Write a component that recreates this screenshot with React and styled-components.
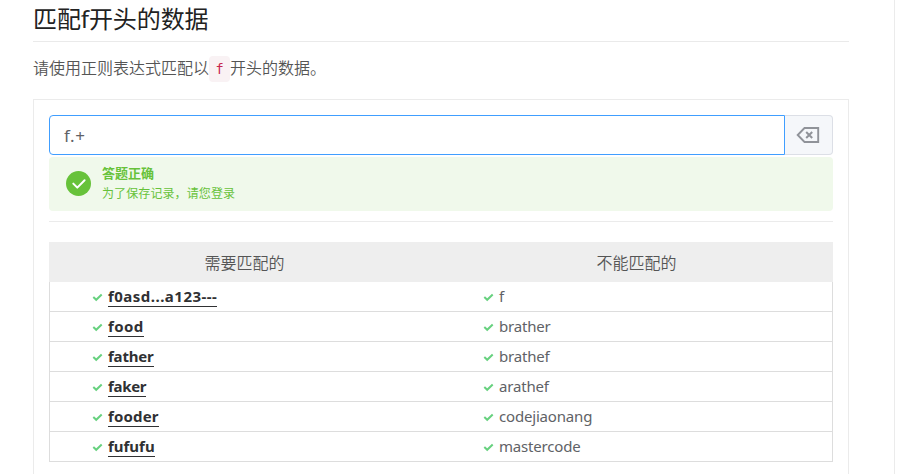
import React from "react";
import styled, { createGlobalStyle } from "styled-components";

const GlobalStyle = createGlobalStyle`
  *, *::before, *::after { box-sizing: border-box; }
  body {
    margin: 0;
    overflow: hidden;
    background: #fff;
    color: #555;
    font-family: "Noto Sans", "Noto Sans CJK SC", sans-serif;
    font-size: 16px;
  }
`;

const Page = styled.main`
  width: 895px;
  height: 474px;
  padding-left: 33px;
  padding-right: 45px;
  border-right: 1px solid #ebebeb;
  overflow: hidden;
  font-weight: 350;
`;

const Title = styled.h2`
  margin: 0;
  height: 42px;
  border-bottom: 1px solid #eaeaea;
  color: #222;
  font-size: 24px;
  font-weight: 400;
  line-height: 38px;
  letter-spacing: -0.1px;
  white-space: nowrap;
`;

const Intro = styled.p`
  display: flex;
  align-items: center;
  height: 26px;
  margin: 14px 0 17px;
  line-height: 24px;
  white-space: nowrap;
`;

const IntroText = styled.span`
  height: 26px;
`;

const Code = styled.code`
  width: 21px;
  height: 26px;
  border-radius: 4px;
  background: #f9f2f4;
  color: #c7254e;
  font: 400 13.6px/26px "DejaVu Sans Mono", monospace;
  text-align: center;
`;

const Card = styled.section`
  height: 400px;
  padding: 15px;
  border: 1px solid #ebebeb;
`;

const InputGroup = styled.div`
  display: flex;
  height: 40px;
`;

const Input = styled.input`
  flex: 1;
  min-width: 0;
  padding: 0 14px;
  border: 1px solid #409eff;
  border-radius: 4px 0 0 4px;
  outline: none;
  background: #fff;
  color: #606266;
  font: 400 17px "Noto Sans", sans-serif;
  letter-spacing: 0.6px;
`;

const ClearButton = styled.button`
  display: flex;
  align-items: center;
  justify-content: center;
  width: 48px;
  padding: 0 2px 0 0;
  border: 1px solid #dcdfe6;
  border-left: 0;
  border-radius: 0 4px 4px 0;
  background: #f5f7fa;
  color: #909399;
`;

const Alert = styled.div`
  display: flex;
  align-items: center;
  height: 54px;
  margin-top: 2px;
  padding: 0 17px 1px;
  gap: 11px;
  border-radius: 4px;
  background: #f0f9eb;
  color: #67c23a;
`;

const AlertText = styled.div`
  display: flex;
  flex-direction: column;
  padding-bottom: 2px;
`;

const AlertTitle = styled.strong`
  font-size: 13px;
  font-weight: 700;
  line-height: 19px;
`;

const AlertDetail = styled.span`
  font-size: 12px;
  font-weight: 400;
  font-family: "Noto Sans CJK SC", sans-serif;
  line-height: 19px;
  letter-spacing: 0.1px;
`;

const Divider = styled.hr`
  height: 1px;
  margin: 10px 0 20px;
  border: 0;
  background: #ebebeb;
`;

const Table = styled.div`
  display: flex;
  flex-direction: column;
`;

const HeaderRow = styled.div`
  display: grid;
  grid-template-columns: 391px 1fr;
  height: 40px;
  background: #eee;
  line-height: 42px;
  text-align: center;
`;

const Row = styled.div`
  display: grid;
  grid-template-columns: 391px 1fr;
  height: 30px;
  border: 1px solid #ddd;
  border-top: 0;
`;

const Cell = styled.div`
  display: flex;
  align-items: flex-start;
  gap: 5px;
  padding-left: 42px;

  svg {
    margin-top: 10px;
  }
`;

const Word = styled.span`
  padding-top: 4px;
  color: #606266;
  font-size: 15px;
  font-weight: 400;
  line-height: 20px;
  letter-spacing: -0.18px;
`;

const Match = styled.strong`
  height: 21px;
  margin-top: 4px;
  border-bottom: 1px solid #303133;
  color: #303133;
  font-size: 15px;
  font-weight: 700;
  line-height: 20px;
  letter-spacing: ${({ $tracking }) => $tracking}px;
`;

const Tick = () => (
  <svg width="11" height="10" viewBox="0 0 11 10" fill="none">
    <path d="M1.3 5.1 4.2 7.8 9.7 2.5" stroke="#67d17f" strokeWidth="2" />
  </svg>
);

const Backspace = () => (
  <svg width="24" height="18" viewBox="0 0 24 18" fill="none" stroke="currentColor">
    <path d="M8.5 2H22.2V16H8.5L1.7 9Z" strokeWidth="1.9" />
    <path d="m10.2 6 6 6m0-6-6 6" strokeWidth="2" />
  </svg>
);

const Success = () => (
  <svg width="25" height="25" viewBox="0 0 25 25" fill="none">
    <circle cx="12.5" cy="12.5" r="12.5" fill="#67c23a" />
    <path d="m7.3 12.6 4 4 7.3-7.4" stroke="#fff" strokeWidth="2" strokeLinecap="round" strokeLinejoin="round" />
  </svg>
);

const rows = [
  { match: "f0asd...a123---", matchTracking: 0.48, other: "f" },
  { match: "food", matchTracking: 0.4, other: "brather" },
  { match: "father", matchTracking: -0.2, other: "brathef" },
  { match: "faker", matchTracking: -0.3, other: "arathef" },
  { match: "fooder", matchTracking: 0.15, other: "codejiaonang" },
  { match: "fufufu", matchTracking: 0, other: "mastercode" },
];

export default function App() {
  return (
    <>
      <GlobalStyle />
      <Page>
        <Title>匹配f开头的数据</Title>
        <Intro>
          <IntroText>请使用正则表达式匹配以</IntroText>
          <Code>f</Code>
          <IntroText>开头的数据。</IntroText>
        </Intro>
        <Card>
          <InputGroup>
            <Input defaultValue="f.+" spellCheck={false} />
            <ClearButton type="button" aria-label="清除"><Backspace /></ClearButton>
          </InputGroup>
          <Alert>
            <Success />
            <AlertText>
              <AlertTitle>答题正确</AlertTitle>
              <AlertDetail>为了保存记录，请您登录</AlertDetail>
            </AlertText>
          </Alert>
          <Divider />
          <Table>
            <HeaderRow>
              <span>需要匹配的</span>
              <span>不能匹配的</span>
            </HeaderRow>
            {rows.map(({ match, matchTracking, other }) => (
              <Row key={match}>
                <Cell><Tick /><Match $tracking={matchTracking}>{match}</Match></Cell>
                <Cell><Tick /><Word>{other}</Word></Cell>
              </Row>
            ))}
          </Table>
        </Card>
      </Page>
    </>
  );
}
